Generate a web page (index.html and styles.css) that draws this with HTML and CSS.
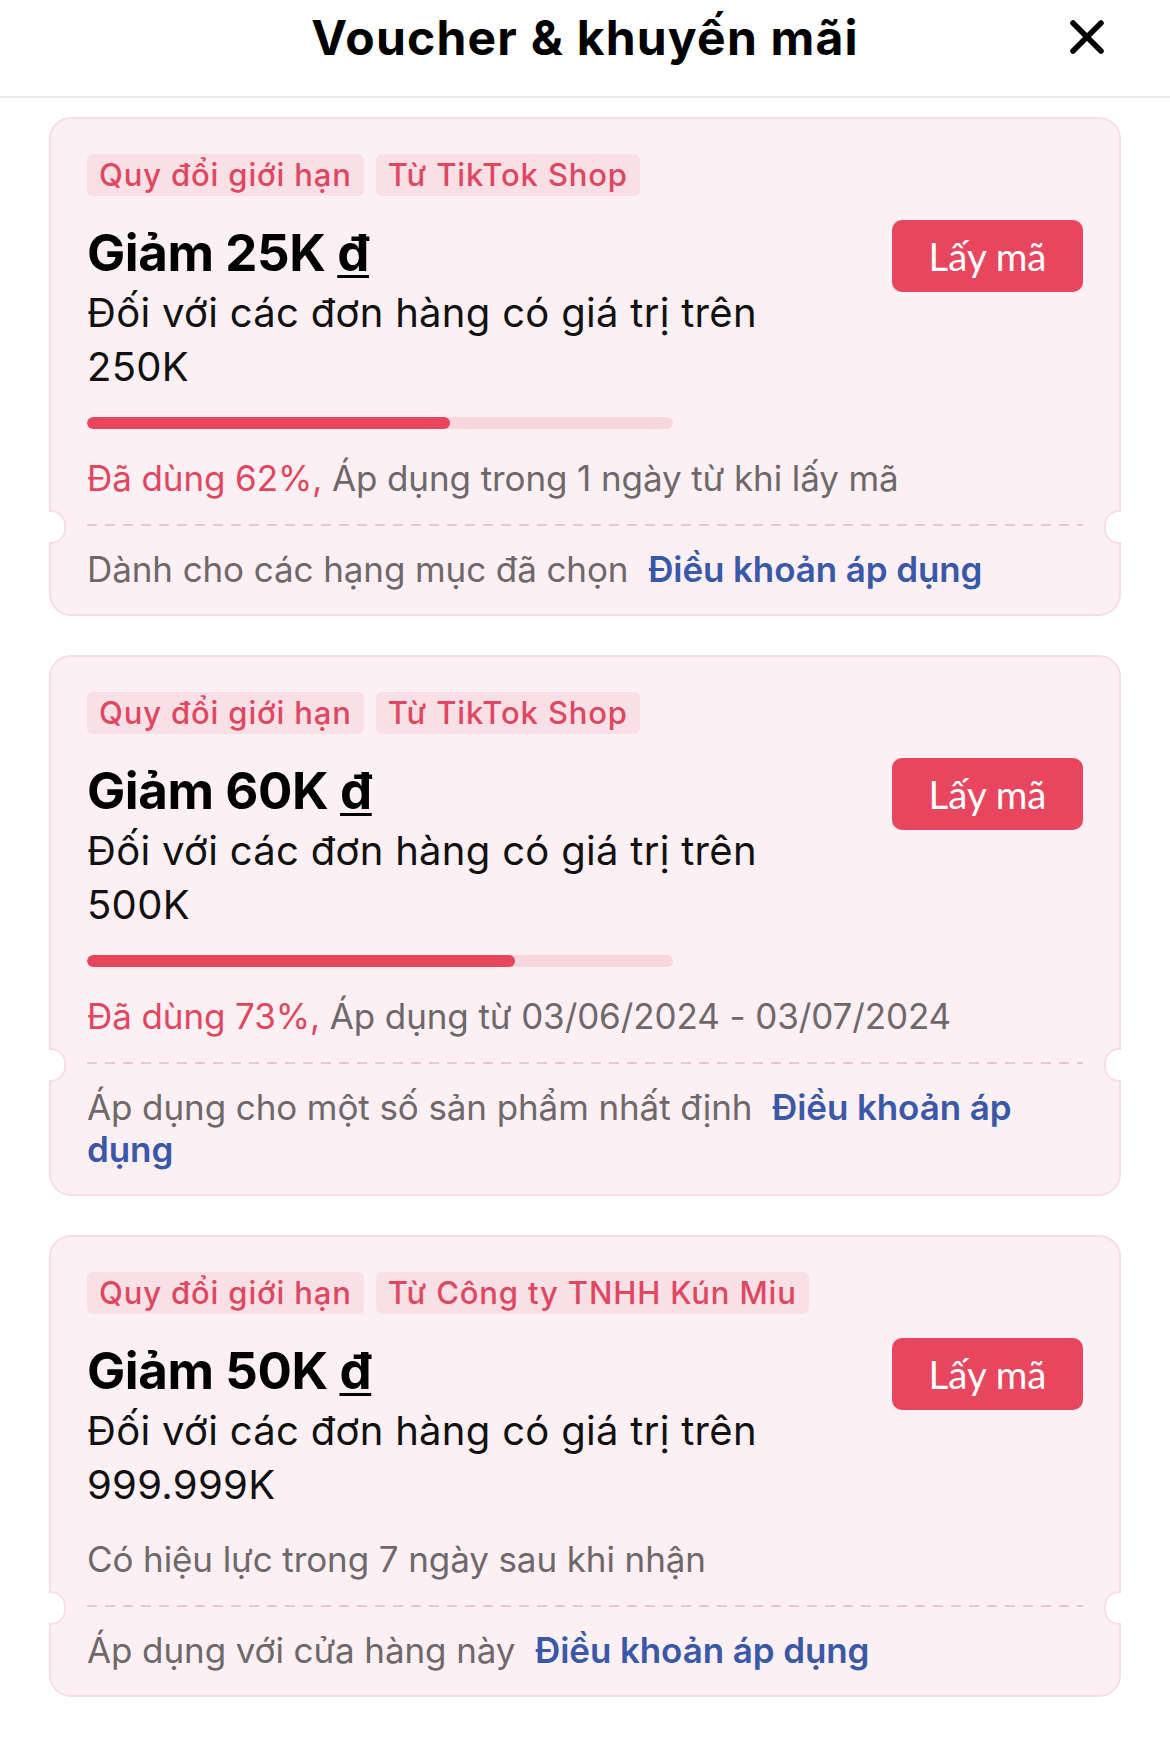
FILE: index.html
```html
<!DOCTYPE html>
<html lang="vi">
<head>
<meta charset="utf-8">
<title>Voucher &amp; khuyến mãi</title>
<link rel="stylesheet" href="styles.css">
</head>
<body>
<header class="top">
  <div class="top-side"></div>
  <h1 class="top-title">Voucher &amp; khuyến mãi</h1>
  <div class="top-side top-side--end">
    <button class="close" aria-label="Đóng">
      <svg width="34" height="34" viewBox="0 0 34 34"><path d="M3 3 L31 31 M31 3 L3 31" stroke="#000" stroke-width="5.5" stroke-linecap="round" fill="none"/></svg>
    </button>
  </div>
</header>

<main class="list">
  <article class="card">
    <div class="card-body">
      <div class="tags"><span class="tag">Quy đổi giới hạn</span><span class="tag">Từ TikTok Shop</span></div>
      <div class="head">
        <div class="head-main">
          <div class="amount">Giảm 25K <u>đ</u></div>
          <div class="desc">Đối với các đơn hàng có giá trị trên 250K</div>
        </div>
        <button class="get">Lấy mã</button>
      </div>
      <div class="bar"><div class="bar-fill" style="width:62%"></div></div>
      <div class="info"><span class="used">Đã dùng 62%,</span> Áp dụng trong 1 ngày từ khi lấy mã</div>
    </div>
    <div class="sep"></div>
    <div class="foot">Dành cho các hạng mục đã chọn <a class="terms">Điều khoản áp dụng</a></div>
  </article>

  <article class="card">
    <div class="card-body">
      <div class="tags"><span class="tag">Quy đổi giới hạn</span><span class="tag">Từ TikTok Shop</span></div>
      <div class="head">
        <div class="head-main">
          <div class="amount">Giảm 60K <u>đ</u></div>
          <div class="desc">Đối với các đơn hàng có giá trị trên 500K</div>
        </div>
        <button class="get">Lấy mã</button>
      </div>
      <div class="bar"><div class="bar-fill" style="width:73%"></div></div>
      <div class="info"><span class="used">Đã dùng 73%,</span> Áp dụng từ 03/06/2024 - 03/07/2024</div>
    </div>
    <div class="sep"></div>
    <div class="foot">Áp dụng cho một số sản phẩm nhất định <a class="terms">Điều khoản áp dụng</a></div>
  </article>

  <article class="card">
    <div class="card-body">
      <div class="tags"><span class="tag">Quy đổi giới hạn</span><span class="tag">Từ Công ty TNHH Kún Miu</span></div>
      <div class="head">
        <div class="head-main">
          <div class="amount">Giảm 50K <u>đ</u></div>
          <div class="desc">Đối với các đơn hàng có giá trị trên 999.999K</div>
        </div>
        <button class="get">Lấy mã</button>
      </div>
      <div class="info info--plain">Có hiệu lực trong 7 ngày sau khi nhận</div>
    </div>
    <div class="sep"></div>
    <div class="foot">Áp dụng với cửa hàng này <a class="terms">Điều khoản áp dụng</a></div>
  </article>
</main>
</body>
</html>
```

FILE: styles.css
```css
* { box-sizing: border-box; }

html, body {
  margin: 0;
  padding: 0;
  background: #ffffff;
}

body {
  font-family: "Inter", "Noto Sans", sans-serif;
  color: #111;
  width: 1170px;
}

/* Header */
.top {
  display: grid;
  grid-template-columns: 1fr auto 1fr;
  height: 98px;
  border-bottom: 2px solid #ebebeb;
}

.top-title {
  margin: 0;
  padding-top: 10px;
  font-size: 48px;
  line-height: 56px;
  font-weight: 700;
  color: #000;
  letter-spacing: 1.2px;
}

.top-side--end {
  display: flex;
  justify-content: flex-end;
  align-items: flex-start;
  padding-right: 66px;
  padding-top: 20px;
}

.close {
  border: 0;
  background: none;
  padding: 0;
  width: 34px;
  height: 34px;
  display: block;
}

/* List */
.list {
  display: flex;
  flex-direction: column;
  gap: 39px;
  padding: 19px 49px 40px;
}

.card {
  background: #fcf0f4;
  border: 2px solid #f7dde4;
  border-radius: 22px;
}

.card-body {
  padding: 35px 36px 0 36px;
}

.tags {
  display: flex;
  gap: 12px;
}

.tag {
  display: block;
  height: 42px;
  line-height: 42px;
  padding: 0 12px;
  border-radius: 6px;
  background: #f9dfe6;
  color: #df4760;
  font-size: 31px;
  font-weight: 500;
  letter-spacing: 0.85px;
}

.head {
  display: flex;
  justify-content: space-between;
  align-items: flex-start;
  gap: 40px;
  margin-top: 27px;
}

.head-main {
  flex: 1;
  max-width: 740px;
}

.amount {
  font-size: 51px;
  line-height: 60px;
  font-weight: 700;
  color: #000;
  letter-spacing: -0.4px;
}

.amount u {
  text-decoration-thickness: 3px;
  text-underline-offset: 4px;
}

.desc {
  margin-top: 3px;
  font-size: 40px;
  line-height: 54px;
  color: #111;
  letter-spacing: 0.3px;
}

.get {
  flex: none;
  width: 191px;
  height: 72px;
  margin-top: -3px;
  border: 0;
  border-radius: 10px;
  background: #e8465e;
  color: #fff;
  font-family: "Lato", "Inter", sans-serif;
  font-size: 38.5px;
  padding: 0;
}

.bar {
  width: 586px;
  height: 12px;
  margin-top: 23px;
  margin-bottom: 4px;
  border-radius: 6px;
  background: #f7d6dd;
  overflow: hidden;
}

.bar-fill {
  height: 100%;
  border-radius: 6px;
  background: #e8455d;
}

.info {
  margin-top: 22px;
  font-size: 35px;
  line-height: 54px;
  color: #6e686a;
  letter-spacing: -0.1px;
}

.info--plain {
  margin-top: 20px;
}

.used {
  color: #e1465e;
}

/* Perforation */
.sep {
  position: relative;
  height: 2px;
  margin-top: 19px;
  padding: 0 36px;
  background-image: linear-gradient(to right, #eec6d1 0, #eec6d1 10px, transparent 10px, transparent 100%);
  background-size: 18px 2px;
  background-repeat: repeat-x;
  background-origin: content-box;
  background-clip: content-box;
}

.sep::before,
.sep::after {
  content: "";
  position: absolute;
  top: 50%;
  width: 15px;
  height: 30px;
  margin-top: -15px;
  background: #fff;
  border: 2px solid #f7dde4;
}

.sep::before {
  left: -2px;
  border-left: 0;
  border-radius: 0 15px 15px 0;
}

.sep::after {
  right: -2px;
  border-right: 0;
  border-radius: 15px 0 0 15px;
}

.foot {
  padding: 22px 36px 24px;
  font-size: 35px;
  line-height: 42px;
  color: #6e686a;
  letter-spacing: -0.1px;
}

.terms {
  margin-left: 10px;
  color: #3a58a8;
  font-weight: 600;
}
```
